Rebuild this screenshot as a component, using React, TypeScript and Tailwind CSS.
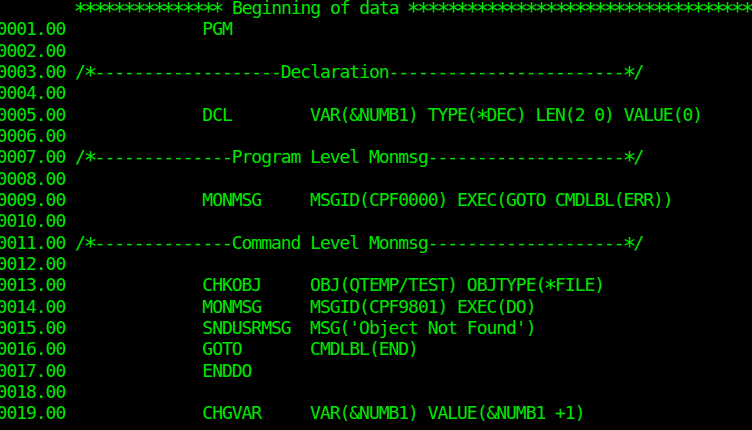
const pad = (s: string, n: number) => s + " ".repeat(Math.max(0, n - s.length));

const cmd = (name: string, params = "") => " ".repeat(13) + pad(name, 11) + params;

const source: string[] = [
  cmd("PGM"),
  "",
  "/*-------------------Declaration------------------------*/",
  "",
  cmd("DCL", "VAR(&NUMB1) TYPE(*DEC) LEN(2 0) VALUE(0)"),
  "",
  "/*--------------Program Level Monmsg--------------------*/",
  "",
  cmd("MONMSG", "MSGID(CPF0000) EXEC(GOTO CMDLBL(ERR))"),
  "",
  "/*--------------Command Level Monmsg--------------------*/",
  "",
  cmd("CHKOBJ", "OBJ(QTEMP/TEST) OBJTYPE(*FILE)"),
  cmd("MONMSG", "MSGID(CPF9801) EXEC(DO)"),
  cmd("SNDUSRMSG", "MSG('Object Not Found')"),
  cmd("GOTO", "CMDLBL(END)"),
  cmd("ENDDO"),
  "",
  cmd("CHGVAR", "VAR(&NUMB1) VALUE(&NUMB1 +1)"),
];

// 5250 asterisks sit mid-height and are a bit bigger than the font's own
const Line = ({ text }: { text: string }) => {
  const parts = text.split("*");
  return (
    <div className="h-[21.33px] whitespace-pre">
      {parts.map((p, i) => (
        <span key={i}>
          {p}
          {i < parts.length - 1 && (
            <span className="inline-block relative top-[3px] scale-125">*</span>
          )}
        </span>
      ))}
    </div>
  );
};

export default function App() {
  const header =
    "        " + "*".repeat(15) + " Beginning of data " + "*".repeat(40);

  return (
    <div className="w-[752px] h-[430px] overflow-hidden bg-black">
      <div
        className="-mt-[3px] -ml-[3.4px] text-[18px] leading-[21.33px] tracking-[-1.04px] text-[#00e600]"
        style={{ fontFamily: '"DejaVu Sans Mono", "Liberation Mono", monospace' }}
      >
        <Line text={header} />
        {source.map((s, i) => (
          <Line
            key={i}
            text={`${String(i + 1).padStart(4, "0")}.00 ${s}`}
          />
        ))}
      </div>
    </div>
  );
}
